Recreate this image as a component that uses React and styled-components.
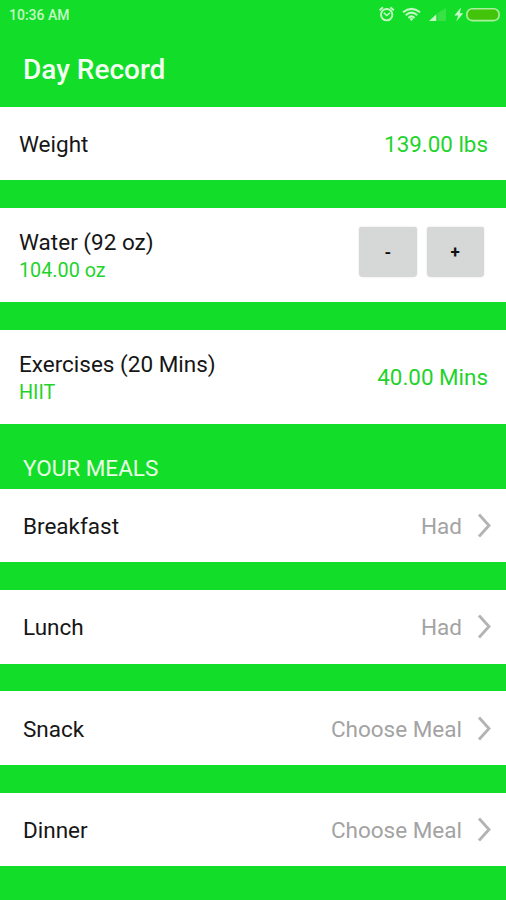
import React from "react"
import styled, { createGlobalStyle } from "styled-components"

const GlobalStyle = createGlobalStyle`
  * {
    box-sizing: border-box;
  }

  body {
    margin: 0;
    background: #12dd28;
    font-family: Roboto, sans-serif;
  }
`

const Screen = styled.main`
  display: flex;
  flex-direction: column;
  width: 506px;
  height: 900px;
  overflow: hidden;
  background: #12dd28;
  color: #161616;
`

const StatusBar = styled.div`
  display: flex;
  align-items: center;
  justify-content: space-between;
  height: 30px;
  padding: 0 6px 0 9px;
  color: #c4f8c4;
`

const Clock = styled.span`
  font-size: 14px;
  font-weight: 500;
  line-height: 30px;
`

const StatusIcons = styled.div`
  display: flex;
  align-items: center;
  height: 30px;
`

const Header = styled.header`
  display: flex;
  align-items: center;
  height: 77px;
  padding: 3px 23px 0;
`

const Title = styled.h1`
  margin: 0;
  color: #f4fff2;
  font-size: 28px;
  font-weight: 500;
  line-height: 34px;
`

const Row = styled.section`
  display: flex;
  flex-shrink: 0;
  align-items: center;
  justify-content: space-between;
  height: ${(props) => (props.$tall ? "94.2px" : "73.4px")};
  margin-bottom: 27.8px;
  padding: 0 18px 0 19px;
  background: #fff;
`

const MealRow = styled(Row)`
  padding: 1px 15px 0 23px;
`

const LabelGroup = styled.div`
  padding-top: 3px;
`

const Label = styled.div`
  font-size: 22.5px;
  line-height: 28px;
`

const Detail = styled.div`
  margin-bottom: -1px;
  color: #1fd32c;
  font-size: 19.8px;
  line-height: 30px;
`

const Value = styled.span`
  color: #1fd32c;
  font-size: 22.4px;
  line-height: 28px;
`

const Stepper = styled.div`
  display: flex;
  gap: 10px;
  margin: 0 4px 7px 0;
`

const StepButton = styled.button`
  width: 57.5px;
  height: 50px;
  padding: 0;
  border: 0;
  border-radius: 2px 2px 4px 4px;
  background: #d6d8d7;
  box-shadow: 0 0 2px rgba(0, 0, 0, 0.14);
  color: #111;
  font-family: Roboto, sans-serif;
  font-size: 17px;
  font-weight: 700;
  line-height: 50px;
`

const SectionTitle = styled.h2`
  flex-shrink: 0;
  height: 36.9px;
  margin: 0;
  padding-left: 23px;
  color: #e9ffe6;
  font-size: 22.5px;
  font-weight: 400;
  line-height: 32px;
`

const MealStatus = styled.div`
  display: flex;
  align-items: center;
  gap: 15px;
  color: #a3a3a3;
  font-size: 22.5px;
  line-height: 28px;
`

const meals = [
  { name: "Breakfast", status: "Had" },
  { name: "Lunch", status: "Had" },
  { name: "Snack", status: "Choose Meal" },
  { name: "Dinner", status: "Choose Meal" },
]

const Chevron = () => (
  <svg width="14" height="26" viewBox="0 0 14 26" fill="none">
    <path d="M2 1.5 L12 12.5 L2 23.5" stroke="#b3b3b3" strokeWidth="2.8" />
  </svg>
)

const DeviceIcons = () => (
  <svg width="122" height="20" viewBox="378 5 122 20" fill="none">
    <g stroke="currentColor" strokeWidth="1.9">
      <circle cx="386.7" cy="14.7" r="5.7" />
      <path d="M379.6 10.2 L383 7.3 M393.8 10.2 L390.4 7.3" />
      <path d="M383.8 12.8 L386.8 15.6 L390 12.8" strokeWidth="1.5" />
    </g>
    <g stroke="currentColor" strokeWidth="2.1">
      <path d="M403 12.3 Q411.5 5.4 420 12.3" />
      <path d="M405.7 15.2 Q411.5 10.2 417.3 15.2" />
      <path d="M408.4 17.9 Q411.5 15 414.6 17.9" />
    </g>
    <path d="M409.6 18.9 Q411.5 17.3 413.4 18.9 L411.5 21Z" fill="currentColor" />
    <path d="M429 21 L436.3 14.2 V21Z" fill="currentColor" />
    <path d="M437.5 13.2 L446 8 V21 H437.5Z" fill="#36e244" />
    <path d="M461 7.5 L454.3 15.4 H458.2 L456.3 21.5 L463.3 13.2 H459.8Z" fill="currentColor" />
    <rect
      x="466.9"
      y="8.8"
      width="32.2"
      height="11.8"
      rx="5.3"
      fill="#43c40a"
      stroke="#a9f29c"
      strokeWidth="1.6"
    />
  </svg>
)

const App = () => {
  return (
    <>
      <GlobalStyle />
      <Screen>
        <StatusBar>
          <Clock>10:36 AM</Clock>
          <StatusIcons>
            <DeviceIcons />
          </StatusIcons>
        </StatusBar>
        <Header>
          <Title>Day Record</Title>
        </Header>
        <Row>
          <Label>Weight</Label>
          <Value>139.00 lbs</Value>
        </Row>
        <Row $tall>
          <LabelGroup>
            <Label>Water (92 oz)</Label>
            <Detail>104.00 oz</Detail>
          </LabelGroup>
          <Stepper>
            <StepButton>-</StepButton>
            <StepButton>+</StepButton>
          </Stepper>
        </Row>
        <Row $tall>
          <LabelGroup>
            <Label>Exercises (20 Mins)</Label>
            <Detail>HIIT</Detail>
          </LabelGroup>
          <Value>40.00 Mins</Value>
        </Row>
        <SectionTitle>YOUR MEALS</SectionTitle>
        {meals.map((meal) => (
          <MealRow key={meal.name}>
            <Label>{meal.name}</Label>
            <MealStatus>
              {meal.status}
              <Chevron />
            </MealStatus>
          </MealRow>
        ))}
      </Screen>
    </>
  )
}

export default App
